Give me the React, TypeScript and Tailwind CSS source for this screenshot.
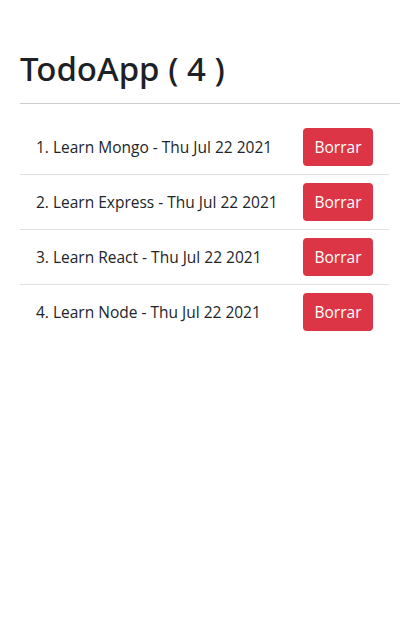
import React from "react";

const todos = [
  "1. Learn Mongo - Thu Jul 22 2021",
  "2. Learn Express - Thu Jul 22 2021",
  "3. Learn React - Thu Jul 22 2021",
  "4. Learn Node - Thu Jul 22 2021",
];

export default function App() {
  return (
    <div
      className="min-h-[635px] bg-white pl-5 pt-[49px] text-[#212529]"
      style={{ fontFamily: '"Open Sans", "Noto Sans", sans-serif' }}
    >
      <h1
        className="text-[33px] font-medium leading-[40px] text-[#1d2125]"
        style={{ fontFamily: '"Noto Sans", "Open Sans", sans-serif' }}
      >
        TodoApp ( 4 )
      </h1>
      <hr className="mt-[14px] border-0 border-t border-[#cccccc]" />
      <ul className="mr-[11px] mt-4">
        {todos.map((t) => (
          <li
            key={t}
            className="flex items-center justify-between border-b border-[#e0e0e0] px-4 py-2 last:border-b-0"
          >
            <span className="pt-px text-[15.5px]">{t}</span>
            <button className="h-[38px] w-[70px] rounded-[4px] bg-[#dc3545] pt-px text-[15.5px] text-white">
              Borrar
            </button>
          </li>
        ))}
      </ul>
    </div>
  );
}
